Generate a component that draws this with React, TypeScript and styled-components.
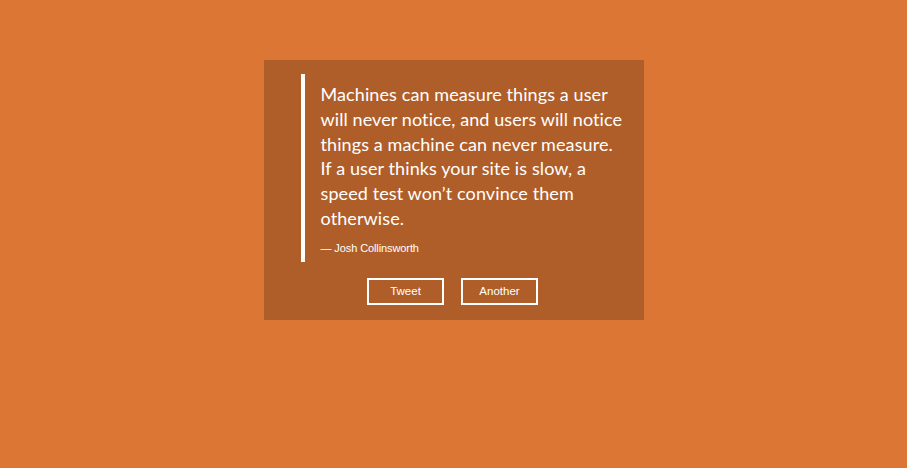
import styled, { createGlobalStyle } from 'styled-components'

const GlobalStyle = createGlobalStyle`
  html, body {
    margin: 0;
    padding: 0;
    background: #dc7634;
  }

  body {
    min-height: 468px;
  }
`

const Page = styled.main`
  display: flex;
  justify-content: center;
  padding-top: 60px;
`

const Card = styled.section`
  width: 380px;
  box-sizing: border-box;
  padding: 14px 20px 15px 37px;

  background: rgba(0, 0, 0, 0.2);
`

const Quote = styled.blockquote`
  margin: 0;
  padding: 8px 0 7px 16px;

  border-left: 4px solid #fff;
`

const Words = styled.p`
  margin: 0;

  color: #fff;
  font-family: Lato, 'Open Sans', sans-serif;
  font-size: 18px;
  letter-spacing: 0.1px;
  line-height: 24.8px;
  white-space: nowrap;
`

const Author = styled.cite`
  display: block;
  margin-top: 10px;

  color: #fff;
  font-family: 'Liberation Sans', Arial, sans-serif;
  font-size: 11px;
  font-style: normal;
  letter-spacing: -0.1px;
  line-height: 14px;
`

const Actions = styled.div`
  display: flex;
  justify-content: center;
  gap: 17px;

  margin-top: 16px;
  margin-left: -19px;
`

const Button = styled.button`
  width: 77px;
  height: 27px;
  padding: 0;

  background: transparent;
  border: 2px solid #fff;
  border-radius: 0;

  color: #fff;
  font-family: 'Liberation Sans', Arial, sans-serif;
  font-size: 11.5px;
  cursor: pointer;
`

const lines = [
  'Machines can measure things a user',
  'will never notice, and users will notice',
  'things a machine can never measure.',
  'If a user thinks your site is slow, a',
  'speed test won\u2019t convince them',
  'otherwise.',
]

export default function App() {
  return (
    <>
      <GlobalStyle />
      <Page>
        <Card>
          <Quote>
            <Words>
              {lines.map((line, i) => (
                <span key={i}>
                  {line}
                  {i < lines.length - 1 && <br />}
                </span>
              ))}
            </Words>
            <Author>— Josh Collinsworth</Author>
          </Quote>
          <Actions>
            <Button>Tweet</Button>
            <Button>Another</Button>
          </Actions>
        </Card>
      </Page>
    </>
  )
}
